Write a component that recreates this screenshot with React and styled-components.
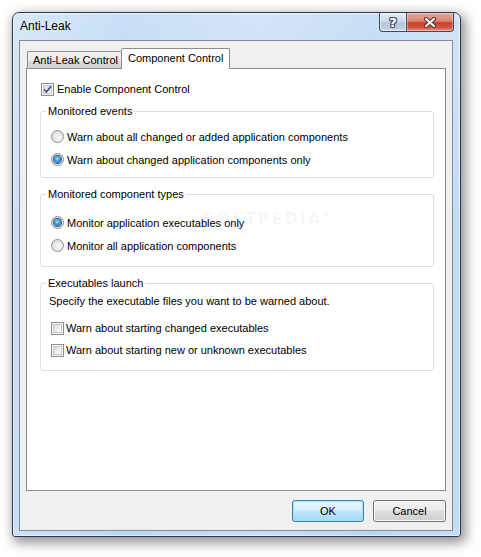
import React from "react";
import styled, { createGlobalStyle, css } from "styled-components";

const GlobalStyle = createGlobalStyle`
  html, body { margin: 0; padding: 0; background: #ffffff; }
  body { font-family: "Liberation Sans", Arial, sans-serif; font-size: 11px; color: #000; }
  * { box-sizing: border-box; }
`;

const Page = styled.div`
  padding: 12px 0 0 12px;
  width: 481px;
  height: 557px;
`;

const Window = styled.div`
  width: 449px;
  height: 525px;
  border: 1px solid #30394a;
  border-radius: 7px 7px 3px 3px;
  background:
    linear-gradient(90deg, rgba(255,255,255,0.25) 0%, rgba(255,255,255,0) 25%, rgba(255,255,255,0.18) 55%, rgba(255,255,255,0) 80%, rgba(255,255,255,0.15) 100%),
    linear-gradient(180deg, #c9e0f6 0%, #b9d6f3 40%, #b8d7f6 100%);
  box-shadow: inset 0 0 0 1px rgba(255,255,255,0.55), 3px 4px 12px 2px rgba(0,0,0,0.42);
  display: flex;
  flex-direction: column;
`;

const TitleBar = styled.div`
  height: 27px;
  display: flex;
  align-items: flex-start;
  padding-left: 7px;
`;

const Title = styled.div`
  font-family: "Liberation Sans", Arial, sans-serif;
  font-size: 12px;
  line-height: 27px;
  color: #000;
  text-shadow: 0 0 6px rgba(255,255,255,0.9);
`;

const Controls = styled.div`
  margin-left: auto;
  margin-right: 6px;
  display: flex;
`;

const CapButton = styled.div`
  height: 19px;
  width: ${(p) => p.$w}px;
  border: 1px solid #3b4a5e;
  border-top: none;
  display: flex;
  align-items: center;
  justify-content: center;
  ${(p) =>
    p.$close
      ? css`
          border-left: none;
          border-radius: 0 0 4px 0;
          background: linear-gradient(180deg, #e9a99c 0%, #d98574 45%, #c6422c 55%, #d2533c 80%, #e59a86 100%);
          box-shadow: inset 0 0 0 1px rgba(255,255,255,0.35);
        `
      : css`
          border-radius: 0 0 0 4px;
          background: linear-gradient(180deg, #e3ebf4 0%, #cfdae7 45%, #b6c6d9 55%, #bccbdc 80%, #cfdde9 100%);
          box-shadow: inset 0 0 0 1px rgba(255,255,255,0.5);
        `}
`;

const HelpGlyph = styled.span`
  font-family: "DejaVu Sans", sans-serif;
  font-weight: bold;
  font-size: 13px;
  line-height: 1;
  color: #ffffff;
  text-shadow:
    1px 0 0 #45536a, -1px 0 0 #45536a, 0 1px 0 #45536a, 0 -1px 0 #45536a,
    1px 1px 0 #45536a, -1px -1px 0 #45536a, 1px -1px 0 #45536a, -1px 1px 0 #45536a;
  margin-top: 1px;
`;

const Client = styled.div`
  flex: 1;
  margin: 0 7px 5px 6px;
  border: 1px solid #838c97;
  background: #f0f0f0;
  display: flex;
  flex-direction: column;
  padding: 8px 6px 8px 6px;
`;

const TabStrip = styled.div`
  display: flex;
  align-items: flex-end;
  height: 20px;
  padding-left: 1px;
  margin-bottom: -1px;
`;

const Tab = styled.div`
  height: ${(p) => (p.$active ? 21 : 18)}px;
  border: 1px solid #898c95;
  border-bottom: none;
  padding: 0 ${(p) => (p.$active ? 6 : 3)}px 0 ${(p) => (p.$active ? 6 : 5)}px;
  border-radius: 2px 2px 0 0;
  font-size: 11px;
  line-height: ${(p) => (p.$active ? 18 : 16)}px;
  position: relative;
  ${(p) =>
    p.$active
      ? css`
          background: #ffffff;
          z-index: 1;
        `
      : css`
          background: linear-gradient(180deg, #f2f2f2 0%, #ebebeb 50%, #dddddd 52%, #cfcfcf 100%);
          border-right: none;
        `}
`;

const Panel = styled.div`
  flex: 1;
  background: #ffffff;
  border: 1px solid #898c95;
  padding: 13px 11px 0 14px;
  position: relative;
  display: flex;
  flex-direction: column;
`;

const OptionRow = styled.label`
  display: flex;
  align-items: center;
  height: ${(p) => p.$h || 23}px;
  margin-left: ${(p) => p.$indent || 0}px;
  gap: ${(p) => p.$gap || 3}px;
  white-space: nowrap;
`;

const BoxOuter = styled.span`
  width: 13px;
  height: 13px;
  border: 1px solid #8e8f8f;
  background: #f4f4f4;
  padding: 1px;
  display: inline-flex;
  flex: none;
`;

const BoxInner = styled.span`
  flex: 1;
  border: 1px solid #c8cbd1;
  background: linear-gradient(135deg, #d6d8dc 0%, #eef0f2 60%, #fbfbfb 100%);
  position: relative;
  display: flex;
  align-items: center;
  justify-content: center;
`;

const RadioOuter = styled.span`
  width: 13px;
  height: 13px;
  border-radius: 50%;
  border: 1px solid #8e8f8f;
  background: radial-gradient(circle at 65% 65%, #fafafa 0%, #e4e4e4 55%, #cfd1d4 100%);
  display: inline-flex;
  align-items: center;
  justify-content: center;
  flex: none;
`;

const RadioDot = styled.span`
  width: 7px;
  height: 7px;
  border-radius: 50%;
  background: radial-gradient(circle at 45% 40%, #a6dbf8 0%, #3f9ad6 45%, #174f86 100%);
  box-shadow: 0 0 0 1px #2a5a86;
`;

const Group = styled.fieldset`
  margin: ${(p) => p.$mt}px 0 0 -1px;
  padding: 0;
  border: 1px solid #d5dfe5;
  border-radius: 3px;
  min-width: 0;
`;

const Legend = styled.legend`
  font-size: 11px;
  line-height: 14px;
  padding: 0 2px;
  margin-left: 5px;
  color: #000;
`;

const GroupBody = styled.div`
  padding: ${(p) => p.$pad};
`;

const Description = styled.div`
  line-height: 14px;
  margin: 0 0 9px -2px;
`;

const Watermark = styled.div`
  position: absolute;
  left: 176px;
  top: 142px;
  font-family: "DejaVu Sans", sans-serif;
  font-weight: bold;
  font-size: 16px;
  letter-spacing: 2px;
  color: rgba(0, 0, 0, 0.055);
  pointer-events: none;
  line-height: 1;
`;

const WatermarkSub = styled.div`
  font-size: 6px;
  letter-spacing: 1px;
  font-weight: normal;
  margin: 2px 0 0 30px;
`;

const ButtonRow = styled.div`
  display: flex;
  justify-content: flex-end;
  gap: 9px;
  padding-top: 9px;
`;

const Button = styled.button`
  width: ${(p) => p.$w}px;
  height: 22px;
  font-family: "Liberation Sans", Arial, sans-serif;
  font-size: 11px;
  color: #000;
  border-radius: 3px;
  padding: 0;
  ${(p) =>
    p.$default
      ? css`
          border: 1px solid #3c7fb1;
          background: linear-gradient(180deg, #eaf6fd 0%, #d9f0fc 45%, #bee6fd 50%, #a7d9f5 100%);
          box-shadow: inset 0 0 0 1px #a6e0f9;
        `
      : css`
          border: 1px solid #707070;
          background: linear-gradient(180deg, #f2f2f2 0%, #ebebeb 45%, #dddddd 50%, #cfcfcf 100%);
          box-shadow: inset 0 0 0 1px #fbfbfb;
        `}
`;

function Checkbox({ checked }) {
  return (
    <BoxOuter>
      <BoxInner>
        {checked && (
          <svg width="9" height="9" viewBox="0 0 9 9" style={{ position: "absolute", left: -1, top: -1 }}>
            <path d="M1 4.5 L3.4 7 L8 1.2" fill="none" stroke="#3f5683" strokeWidth="1.8" strokeLinejoin="round" />
          </svg>
        )}
      </BoxInner>
    </BoxOuter>
  );
}

function Radio({ checked }) {
  return <RadioOuter>{checked && <RadioDot />}</RadioOuter>;
}

export default function App() {
  return (
    <>
      <GlobalStyle />
      <Page>
        <Window>
          <TitleBar>
            <Title>Anti-Leak</Title>
            <Controls>
              <CapButton $w={28}>
                <HelpGlyph>?</HelpGlyph>
              </CapButton>
              <CapButton $w={47} $close>
                <svg width="14" height="11" viewBox="0 0 14 11">
                  <path d="M3 2 L11 9 M11 2 L3 9" stroke="#5a2a22" strokeWidth="4.2" strokeLinecap="round" />
                  <path d="M3 2 L11 9 M11 2 L3 9" stroke="#ffffff" strokeWidth="2.2" strokeLinecap="round" />
                </svg>
              </CapButton>
            </Controls>
          </TitleBar>
          <Client>
            <TabStrip>
              <Tab>Anti-Leak Control</Tab>
              <Tab $active>Component Control</Tab>
            </TabStrip>
            <Panel>
              <Watermark>
                SOFTPEDIA<sup style={{ fontSize: 7 }}>®</sup>
                <WatermarkSub>www.softpedia.com</WatermarkSub>
              </Watermark>
              <OptionRow $h={14} $gap={3}>
                <Checkbox checked />
                <span>Enable Component Control</span>
              </OptionRow>
              <Group $mt={8}>
                <Legend>Monitored events</Legend>
                <GroupBody $pad="7px 0 6px 10px">
                  <OptionRow>
                    <Radio />
                    <span>Warn about all changed or added application components</span>
                  </OptionRow>
                  <OptionRow>
                    <Radio checked />
                    <span>Warn about changed application components only</span>
                  </OptionRow>
                </GroupBody>
              </Group>
              <Group $mt={9}>
                <Legend>Monitored component types</Legend>
                <GroupBody $pad="10px 0 9px 10px">
                  <OptionRow>
                    <Radio checked />
                    <span>Monitor application executables only</span>
                  </OptionRow>
                  <OptionRow>
                    <Radio />
                    <span>Monitor all application components</span>
                  </OptionRow>
                </GroupBody>
              </Group>
              <Group $mt={9}>
                <Legend>Executables launch</Legend>
                <GroupBody $pad="4px 0 9px 10px">
                  <Description>Specify the executable files you want to be warned about.</Description>
                  <OptionRow $h={22} $gap={2}>
                    <Checkbox />
                    <span>Warn about starting changed executables</span>
                  </OptionRow>
                  <OptionRow $h={22} $gap={2}>
                    <Checkbox />
                    <span>Warn about starting new or unknown executables</span>
                  </OptionRow>
                </GroupBody>
              </Group>
            </Panel>
            <ButtonRow>
              <Button $w={72} $default>OK</Button>
              <Button $w={73}>Cancel</Button>
            </ButtonRow>
          </Client>
        </Window>
      </Page>
    </>
  );
}
